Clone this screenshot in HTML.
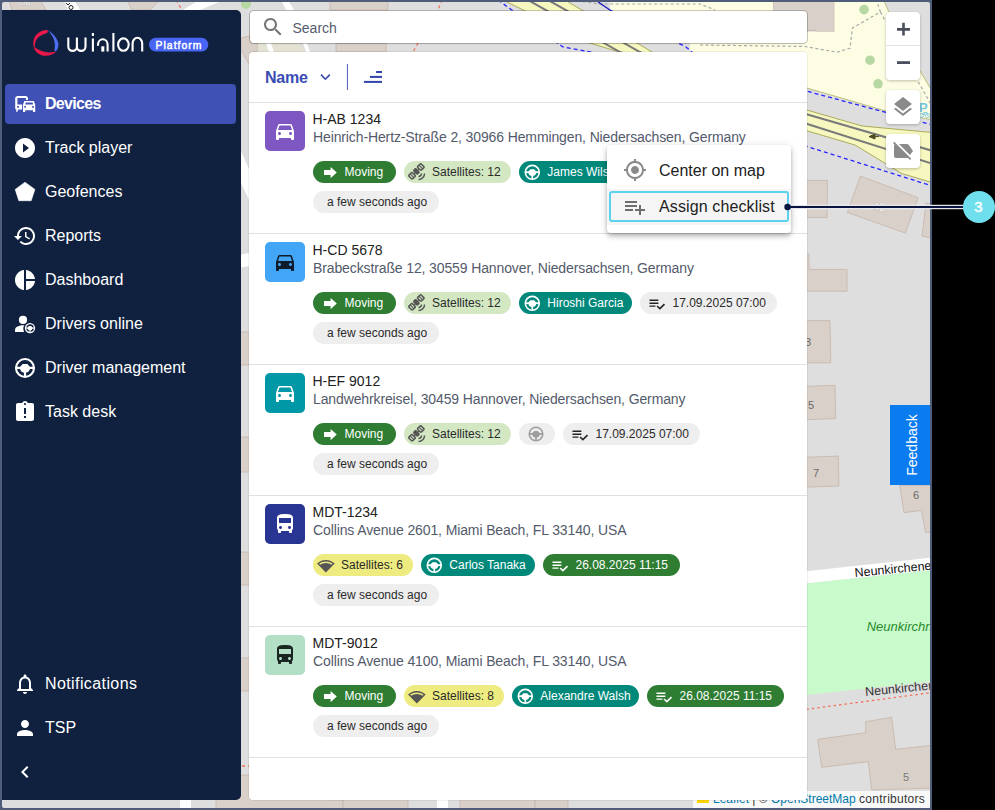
<!DOCTYPE html>
<html><head><meta charset="utf-8">
<style>
*{box-sizing:border-box;margin:0;padding:0}
html,body{width:995px;height:810px;overflow:hidden;background:#000;font-family:"Liberation Sans",sans-serif}
.abs{position:absolute}
#frame{position:absolute;left:0;top:0;width:932px;height:810px;background:#4f5c7a}
#map{position:absolute;left:2px;top:2px;width:928px;height:806px;background:#dfdede;overflow:hidden;border-radius:2px}
#map svg{position:absolute;left:-2px;top:-2px}
#sidebar{position:absolute;left:2px;top:10px;width:239px;height:790px;background:#0f213f;border-radius:0 5px 5px 0}
.nav{position:absolute;left:3px;width:231px;height:40px;color:#fff;font-size:16px}
.nav.active{background:#3f51b5;border-radius:4px;font-weight:bold;letter-spacing:-0.7px}
.nav svg{position:absolute;left:8px;top:8px;width:24px;height:24px}
.nav span{position:absolute;left:40px;top:0;line-height:40px;white-space:nowrap}
#search{position:absolute;left:250px;top:11px;width:556.5px;height:32px;background:#fff;border-radius:4px;box-shadow:0 0 0 1px rgba(0,0,0,.2),0 1px 2px rgba(0,0,0,.1)}
#panel{position:absolute;left:249px;top:52px;width:558px;height:748px;background:#fff;border-radius:4px;overflow:hidden;box-shadow:0 0 0 1px rgba(0,0,0,.06)}
.hdr{position:absolute;left:0;top:0;width:558px;height:51px;border-bottom:1px solid #e0e0e0}
.item{position:absolute;left:0;width:558px;height:131px;border-bottom:1px solid #e0e0e0}
.av{position:absolute;left:16px;top:8px;width:40px;height:40px;border-radius:5px}
.av svg{position:absolute;left:8px;top:8px;width:24px;height:24px}
.t1{position:absolute;left:63.5px;top:7.65px;font-size:14px;line-height:17px;color:#212121;white-space:nowrap}
.t2{position:absolute;left:64px;top:26.15px;font-size:14px;line-height:17px;color:#535a6b;white-space:nowrap;letter-spacing:-0.12px}
.chip{position:absolute;height:22px;border-radius:11px;font-size:12px;line-height:22px;white-space:nowrap}
.chip svg{position:absolute}
.chip span{position:absolute;top:0}
.g{background:#2e7d32;color:#fff}
.lg{background:#d3e7c3;color:#2a2a2a}
.tl{background:#00897b;color:#fff}
.gr{background:#eeeeee;color:#2a2a2a}
.yl{background:#eeeb80;color:#2a2a2a}
.ctrl{position:absolute;left:886px;width:34px;background:#fff;border-radius:4px;box-shadow:0 1px 3px rgba(0,0,0,.25)}
#menu{position:absolute;left:607px;top:145px;width:184px;height:88px;background:#fff;border-radius:4px;box-shadow:0 2px 4px -1px rgba(0,0,0,.2),0 4px 5px 0 rgba(0,0,0,.14),0 1px 10px 0 rgba(0,0,0,.12)}
</style></head><body>
<div id="frame"></div>
<div id="map">
<svg width="995" height="810" viewBox="0 0 995 810"><g fill="#d9d0c9" stroke="#c4b5aa" stroke-width="0.8">
<!-- top strip buildings -->
<path d="M9 0H40L46 10H12Z"/>
<path d="M127 0H160L150 10H132Z"/>
<path d="M330 0H388V10H330Z"/>
<path d="M773 0H834.4V31.8H816V30.4H773Z"/>
<!-- middle strip -->
<path d="M336 43H386V52H336Z"/>

<!-- left strip -->
<path d="M241 38L250 36V43H258V52H250V66L241 50Z"/>
<path d="M236 332H250V365H236Z"/>
<path d="M236 437H250V472H236Z"/>
<path d="M236 552H250V585H236Z"/>
<path d="M236 658H250V691H236Z"/>
<path d="M216 775H250V798L343 800V810H216Z"/>
<!-- bottom strip -->
<path d="M343 798H408V810H343Z"/>
<path d="M460 798H535V810H460Z"/>
<path d="M535 798H568V810H535Z"/>
<!-- right side buildings -->
<path d="M800 180.4H827.5L827 217.5H800Z"/>
<path d="M860.3 176L918.2 197.7L905.3 233.1L847.4 212.4Z"/>
<path d="M926 203L940 206V240L922 236Z"/>
<path d="M800 254H809V269.4H847L847 291.2H800Z"/>
<path d="M800 320.6H830L830.8 362.8H800Z"/>
<path d="M800 386.5L835 385.3L835.7 418.5L800 420Z"/>
<path d="M800 457.5L838.3 456L839 486L800 487.4Z"/>
<path d="M899.7 485.4H935V532.2H925.5L921.5 510.4L904 512.6Z"/>
<path d="M817.7 739.3L865.7 732.7V721.7L891.7 717.3L895.7 749.3L935 745V788L871.7 790L868.3 761.7L821.7 767.3Z"/>
</g>
<!-- yellow area top right -->
<path d="M610 0H773V31.8H834.4V0H883.7L888.5 11L919.8 70.6L930.2 88V119.6L885.3 110.8L805 87.5L690 52V43H610Z" fill="#fdfde3"/>
<path d="M883.7 0L888.5 11L919.8 70.6L932 91" fill="none" stroke="#b8b870" stroke-width="0.9"/>
<path d="M690 52L805 87.5L885.3 110.8L932 119.8" fill="none" stroke="#b8b870" stroke-width="0.9"/>
<!-- dashed paths -->
<g fill="none" stroke="#a8a8a8" stroke-width="1.2" stroke-dasharray="3 2.5">
<path d="M700 45L805 46.5L837.1 52.2L850 48.2L852.4 28.1L880.4 12L876.4 0"/>
<path d="M880.4 12L885.3 20.9"/>
<path d="M918.2 81.9L932 106"/>
<path d="M572 0L600 4L700 4L715 10"/>
</g>
<!-- trees -->
<g fill="#b7d8a2"><circle cx="864.1" cy="9.6" r="4.8"/><circle cx="870" cy="60.2" r="4.8"/><circle cx="878" cy="83.8" r="4.8"/><circle cx="246" cy="4" r="5"/></g>
<!-- road band with rails -->
<path d="M503 0L590 43L805 109.5L862 126L932 132.5V182.5L901.8 173.5L855 145L805 130.2L652 52L565 0Z" fill="#f6f8c0" stroke="#a3a34e" stroke-width="0.9"/>

<g stroke="#7a7a7a" stroke-width="2" fill="none">
<path d="M528 0L620 52L805 113.8L932 150.7"/>
<path d="M548 0L640 52L805 123.3L932 163.7"/>
</g>
<path d="M869 136.6L875 134.2V139Z M874 136.6H879" stroke="#4a4a20" stroke-width="1" fill="#4a4a20"/>
<!-- blue dashed -->
<g fill="none" stroke="#2424ff" stroke-width="1.3" stroke-dasharray="4 3">
<path d="M498 0L563 47L805 90.7L932 124.8"/>
<path d="M610 10L686 47L805 145.8L932 186"/>
<path d="M598 2L610 10" stroke-dasharray="none" stroke="#2020c0" stroke-width="1.5"/>
</g>
<!-- white roads -->
<g fill="#fff">
<path d="M64 0H74L80 10H68Z"/>
<path d="M183 10L199 0H224L200 10Z"/>
<path d="M281 0H288L294 10H286Z"/>
<path d="M258 43H300L304 52H258Z" fill="#e3e2d3"/><path d="M266 43H271L274 52H269Z"/><path d="M303 43H307L310 52H306Z"/>
<path d="M236 139.7L250 171.2V202L236 172.4Z"/><path d="M236 255.6L250 252.8V265.8L236 268.6Z"/>
<path d="M180 800H191V810H180Z"/>
<path d="M437 800H448V810H437Z"/>
<path d="M790 573L932 557.5V570L790 585.2Z"/>
</g>
<!-- red dashed -->
<g fill="none" stroke="#f0735f" stroke-width="1.3" stroke-dasharray="3 3">
<path d="M176 0L182 10"/>
<path d="M442 0L438 10"/>
<path d="M418 43L413 52"/>
<path d="M790 711.6L932 692.5" stroke-dasharray="2.5 3"/>
<path d="M236 766H250"/>
</g>
<!-- park -->
<path d="M790 585.2L932 570V681.5L790 696.8Z" fill="#c8facc"/>
<!-- labels -->
<g font-family="Liberation Sans" font-size="12.5" fill="#222">
<text x="855" y="577" transform="rotate(-5.5 855 577)" fill="#111">Neunkirchener</text>
<text x="865.5" y="696" transform="rotate(-5.5 865.5 696)" fill="#333">Neunkirchen</text>
</g>
<text x="866.7" y="630.7" font-family="Liberation Sans" font-style="italic" font-size="13" fill="#2a8a2a">Neunkirchner</text>
<g font-family="Liberation Sans" font-size="11" fill="#6a6a6a">
<text x="873" y="211" fill="#fff" stroke="#888" stroke-width="0.6" paint-order="stroke">48</text>
<text x="805" y="346">3</text>
<text x="808" y="408.5">5</text>
<text x="813" y="477">7</text>
<text x="913" y="498.5">6</text>
<text x="903" y="781" fill="#7a7a7a">5</text>
</g>
<text x="919" y="111.8" font-family="Liberation Sans" font-weight="bold" font-size="13" fill="#7ac6e0">P</text><g fill="none" stroke="#7ac6e0" stroke-width="0.9"><circle cx="921.5" cy="115.5" r="2"/><circle cx="927.5" cy="115.5" r="2"/><path d="M921.5 115.5L924 112.5H927L927.5 115.5M924 112.5L925 115.5"/></g>
<text x="19" y="4.8" font-family="Liberation Sans" font-size="8" fill="#fff" stroke="#999" stroke-width="0.5" paint-order="stroke">OB</text><g fill="none" stroke="#222" stroke-width="1"><path d="M66 3L68 5L70 3"/><circle cx="71" cy="7.5" r="2"/></g></svg>
</div>
<div class="ctrl" style="top:12px;height:68px">
<div class="abs" style="left:0;top:33px;width:34px;height:1px;background:#e0e0e0"></div>
<svg class="abs" style="left:0;top:0" width="34" height="68" viewBox="886 12 34 68"><path d="M902.2 22.8H904.8V35.6H902.2Z M897 28H910V30.7H897Z" fill="#4a4f5c"/><rect x="897" y="61.2" width="13" height="2.8" fill="#4a4f5c"/></svg>
</div>
<div class="ctrl" style="top:90px;height:34px"><svg class="abs" style="left:5px;top:5px;width:24px;height:24px" viewBox="0 0 24 24" fill="#8a8a8a"><path d="M11.99 18.54l-7.37-5.73L3 14.07l9 7 9-7-1.63-1.27-7.38 5.74zM12 16l7.36-5.73L21 9l-9-7-9 7 1.63 1.27L12 16z"/></svg></div>
<div class="ctrl" style="top:134px;height:34px"><svg class="abs" style="left:5px;top:5px;width:24px;height:24px" viewBox="0 0 24 24" fill="#8a8a8a"><path d="M3.25 2.75l17 17L19 21l-2-2H5c-1.1 0-2-.9-2-2V7c0-.55.23-1.05.59-1.41L2 4l1.25-1.25zM22 12l-4.37-6.16C17.27 5.33 16.67 5 16 5H8l11 11 3-4z"/></svg></div>
<div class="abs" style="left:890px;top:405px;width:40px;height:80px;background:#0b7bf0"><div class="abs" style="left:-18px;top:30px;width:80px;height:20px;line-height:20px;text-align:center;color:#fff;font-size:14px;transform:rotate(-90deg)">Feedback</div></div>

<div class="abs" style="left:693px;top:791px;width:237px;height:17px;background:rgba(255,255,255,.8)"></div>
<div class="abs" style="left:697px;top:791px;height:17px;line-height:17px;font-size:12px;color:#333;white-space:nowrap"><span style="display:inline-block;width:12px;height:8px;background:#ffd500;margin-right:4px"></span><span style="color:#0078a8">Leaflet</span> | © <span style="color:#0078a8">OpenStreetMap</span> <span style="letter-spacing:0.28px">contributors</span></div>
<div id="sidebar"><svg class="abs" style="left:28px;top:15px" width="190" height="40" viewBox="30 25 190 40">
<path d="M47.6 30C42 30 37 32.5 34.5 37.5C33 40.5 33 44.5 33.8 47.5L34.8 47.2C34.8 44 35.3 41.5 36.5 39.5C38.5 36.2 42.5 34.5 47.2 33C47.8 32.2 48 30.8 47.6 30Z" fill="#e8194a"/>
<path d="M33.8 47.4C35.5 52.5 40 55.8 45.5 55.8C50 55.8 54 54 56.5 51.2C53 52.4 50 52.6 47 52.2C42 51.5 38 49.5 35 47.4Z" fill="#e8194a"/>
<path d="M47.8 30C52.5 33 56.5 37 58 42C59 45.5 58 49.5 55.8 51.3C54.8 51.5 54.3 50.6 54.6 49.6C55.3 46 55 42 53.5 38.5C52.2 35.5 50 32.5 47.8 30Z" fill="#4f6ff5"/>
<g fill="none" stroke="#fff" stroke-width="2.1" stroke-linecap="butt">
<path d="M68.3 37.6V46.6A4.3 4.3 0 0 0 76.9 46.6V37.6M76.9 46.6A4.3 4.3 0 0 0 85.5 46.6V37.6"/>
<path d="M92.9 38.5V51.6"/>
<path d="M98 45.8V44.6A4.8 5.3 0 0 1 107.6 44.6V51.6"/>
<path d="M113.4 33V51.6"/>
<ellipse cx="123.4" cy="44.6" rx="5.3" ry="6.2"/>
<path d="M132.6 51.6V43.4A4.8 5.6 0 0 1 142.2 43.4V51.6"/>
</g>
<rect x="91.85" y="33" width="2.1" height="3" fill="#fff"/>
<rect x="101.3" y="46.3" width="3" height="5.3" fill="#fff"/>
<rect x="149" y="37.8" width="59.3" height="13.7" rx="6.85" fill="#4865f6"/>
<text x="155.6" y="48.6" fill="#fff" stroke="#fff" stroke-width="0.45" font-family="Liberation Sans" font-size="10.4" letter-spacing="1.02">Platform</text>
</svg><div class="nav active" style="top:74px"><svg viewBox="13 92 24 24" fill="#fff" style="color:#fff"><path fill-rule="evenodd" d="M17.7 95.9H25.5A2.5 2.5 0 0 1 28 98.4V99.9H25.9V98.1H17.4V104.6H22.2V109.4H18.3L17.2 112H16.3V109.5A1.3 1.3 0 0 1 15.2 108.2V98.4A2.5 2.5 0 0 1 17.7 95.9ZM17.2 106.1V107.8H18.9V106.1Z"/><path fill-rule="evenodd" stroke="#3f51b5" stroke-width="1.1" paint-order="stroke" d="M24.3 100.9H33.8L35.2 104.4V112H33V110.2H25.2V112H23V104.4ZM25.7 102.4L25.2 104.4H33.1L32.6 102.4ZM24.3 106.1V107.8H25.9V106.1ZM32.2 106.1V107.8H33.9V106.1Z"/></svg><span>Devices</span></div><div class="nav" style="top:118px"><svg viewBox="0 0 24 24" fill="#fff" style="color:#fff"><path d="M12 2C6.48 2 2 6.48 2 12s4.48 10 10 10 10-4.48 10-10S17.52 2 12 2zm-2 14.5v-9l6 4.5-6 4.5z"/></svg><span>Track player</span></div><div class="nav" style="top:162px"><svg viewBox="0 0 24 24" fill="#fff" style="color:#fff"><path d="M12 2.2L21.9 9.4L18.2 20.7H5.8L2.2 9.4Z" stroke="#fff" stroke-width="0.6" stroke-linejoin="round"/></svg><span>Geofences</span></div><div class="nav" style="top:206px"><svg viewBox="0 0 24 24" fill="#fff" style="color:#fff"><path d="M13 3c-4.97 0-9 4.03-9 9H1l3.89 3.89.07.14L9 12H6c0-3.87 3.13-7 7-7s7 3.13 7 7-3.13 7-7 7c-1.93 0-3.68-.79-4.94-2.06l-1.42 1.42C8.27 19.99 10.51 21 13 21c4.97 0 9-4.03 9-9s-4.03-9-9-9zm-1 5v5l4.28 2.54.72-1.21-3.5-2.08V8H12z"/></svg><span>Reports</span></div><div class="nav" style="top:250px"><svg viewBox="0 0 24 24" fill="#fff" style="color:#fff"><path d="M11 2v20c-5.07-.5-9-4.79-9-10s3.93-9.5 9-10zm2.03 0v8.99H22c-.47-4.74-4.24-8.52-8.97-8.99zm0 11.01V22c4.74-.47 8.5-4.25 8.97-8.99h-8.97z"/></svg><span>Dashboard</span></div><div class="nav" style="top:294px"><svg viewBox="0 0 24 24" fill="#fff" style="color:#fff"><circle cx="10" cy="7.9" r="4.1"/><path d="M2.05 20.1V17.6C2.05 14.8 6.5 13.2 10 13.2C10.6 13.2 11.2 13.25 11.5 13.3C10.6 14.4 10.3 15.6 10.3 16.6C10.3 18 10.7 19.1 11.3 20.1Z"/><g transform="translate(17 16.1) scale(0.5) translate(-12 -12)"><circle cx="12" cy="12" r="9" fill="none" stroke="currentColor" stroke-width="2.6"/><rect x="3" y="10.75" width="18" height="2.25"/><path d="M9.6 8H14.4L17 11V12.3A5 4.4 0 0 1 7 12.3V11Z"/><rect x="10.9" y="14" width="2.2" height="6.5"/></g></svg><span>Drivers online</span></div><div class="nav" style="top:338px"><svg viewBox="0 0 24 24" fill="#fff" style="color:#fff"><circle cx="12" cy="12" r="9" fill="none" stroke="currentColor" stroke-width="2.1"/><rect x="3" y="10.75" width="18" height="2.25"/><path d="M9.6 8H14.4L17 11V12.3A5 4.4 0 0 1 7 12.3V11Z"/><rect x="10.9" y="14" width="2.2" height="6.5"/></svg><span>Driver management</span></div><div class="nav" style="top:382px"><svg viewBox="0 0 24 24" fill="#fff" style="color:#fff"><path d="M19 3h-4.18C14.4 1.84 13.3 1 12 1c-1.3 0-2.4.84-2.82 2H5c-1.1 0-2 .9-2 2v14c0 1.1.9 2 2 2h14c1.1 0 2-.9 2-2V5c0-1.1-.9-2-2-2zm-6 15h-2v-2h2v2zm0-4h-2V8h2v6zm-1-9c-.55 0-1-.45-1-1s.45-1 1-1 1 .45 1 1-.45 1-1 1z"/></svg><span>Task desk</span></div><div class="nav" style="top:654px"><svg viewBox="0 0 24 24" fill="#fff" style="color:#fff"><path d="M12 22c1.1 0 2-.9 2-2h-4c0 1.1.89 2 2 2zm6-6v-5c0-3.07-1.64-5.64-4.5-6.32V4c0-.83-.67-1.5-1.5-1.5s-1.5.67-1.5 1.5v.68C7.63 5.36 6 7.92 6 11v5l-2 2v1h16v-1l-2-2zm-2 1H8v-6c0-2.48 1.51-4.5 4-4.5s4 2.02 4 4.5v6z"/></svg><span style="letter-spacing:0.4px">Notifications</span></div><div class="nav" style="top:698px"><svg viewBox="0 0 24 24" fill="#fff" style="color:#fff"><path d="M12 12c2.21 0 4-1.79 4-4s-1.79-4-4-4-4 1.79-4 4 1.79 4 4 4zm0 2c-2.67 0-8 1.34-8 4v2h16v-2c0-2.66-5.33-4-8-4z"/></svg><span>TSP</span></div><div class="nav" style="top:742px"><svg viewBox="0 0 24 24" fill="#fff" style="left:7.5px;top:8px"><path d="M15.41 7.41 14 6l-6 6 6 6 1.41-1.41L10.83 12z"/></svg></div></div>

<div id="search">
<svg class="abs" style="left:11px;top:4px;width:24px;height:24px" viewBox="0 0 24 24" fill="#757575"><path d="M15.5 14h-.79l-.28-.27C15.41 12.59 16 11.11 16 9.5 16 5.91 13.090 3 9.5 3S3 5.91 3 9.5 5.91 16 9.5 16c1.61 0 3.09-.59 4.23-1.57l.27.28v.79l5 4.99L20.49 19l-4.99-5zm-6 0C7.01 14 5 11.99 5 9.5S7.01 5 9.5 5 14 7.01 14 9.5 11.99 14 9.5 14z"/></svg>
<div class="abs" style="left:42.5px;top:9px;font-size:14px;line-height:17px;color:#545b6d">Search</div>
</div>
<div id="panel"><div class="hdr">
<div class="abs" style="left:16px;top:15.7px;font-size:16px;line-height:20px;font-weight:bold;letter-spacing:-0.2px;color:#3a4cb4">Name</div>
<svg class="abs" style="left:0;top:0" width="200" height="50" viewBox="249 52 200 50">
<polyline points="321,74.6 325.4,79.2 329.8,74.6" fill="none" stroke="#3949ab" stroke-width="1.6"/>
<rect x="346.9" y="64" width="1.1" height="26" fill="#5c6bc0"/>
<rect x="376.1" y="71" width="5.9" height="2" fill="#3044aa"/>
<rect x="369.9" y="75.9" width="12.1" height="2" fill="#3044aa"/>
<rect x="363.9" y="80.9" width="18.1" height="2" fill="#3044aa"/>
</svg>
</div><div class="item" style="top:51px"><div class="av" style="background:#7e57c2"><svg viewBox="0 0 24 24" fill="#fff"><path d="M18.92 6.01C18.72 5.42 18.16 5 17.5 5h-11c-.66 0-1.21.42-1.42 1.01L3 12v8c0 .55.45 1 1 1h1c.55 0 1-.45 1-1v-1h12v1c0 .55.45 1 1 1h1c.55 0 1-.45 1-1v-8l-2.08-5.99zM6.5 16c-.83 0-1.5-.67-1.5-1.5S5.67 13 6.5 13s1.5.67 1.5 1.5S7.33 16 6.5 16zm11 0c-.83 0-1.5-.67-1.5-1.5s.67-1.5 1.5-1.5 1.5.67 1.5 1.5-.67 1.5-1.5 1.5zM5 11l1.5-4.5h11L19 11H5z"/></svg></div><div class="t1">H-AB 1234</div><div class="t2">Heinrich-Hertz-Straße 2, 30966 Hemmingen, Niedersachsen, Germany</div><div class="chip g" style="left:64px;top:58px;width:83px"><svg style="left:10.5px;top:5.5px;width:13px;height:11.2px" viewBox="0 0 13 11.2" fill="#fff"><path d="M0 3.1H6.6V0L12.8 5.6L6.6 11.2V8.1H0Z"/></svg><span style="left:31.5px">Moving</span></div><div class="chip lg" style="left:155px;top:58px;width:107px"><svg style="left:4px;top:2px;width:18px;height:18px;color:#555" viewBox="0 0 24 24" fill="#555" ><path d="M15.44.59l-3.18 3.18c-.78.78-.78 2.05 0 2.83l1.24 1.24-.71.71-1.24-1.25c-.78-.78-2.05-.78-2.83 0L7.3 8.72c-.78.78-.78 2.05 0 2.83l1.24 1.24-.71.71-1.23-1.25c-.78-.78-2.05-.78-2.83 0L.59 15.43c-.78.78-.78 2.05 0 2.83l3.54 3.54c.78.78 2.05.78 2.83 0l3.18-3.18c.78-.78.78-2.05 0-2.83L8.9 14.55l.71-.71 1.24 1.24c.78.78 2.05.78 2.83 0l1.41-1.41c.78-.78.78-2.05 0-2.83L13.84 9.6l.71-.71 1.24 1.24c.78.78 2.05.78 2.83 0l3.18-3.18c.78-.78.78-2.05 0-2.83L18.26.58c-.78-.78-2.04-.78-2.82.01zM6.6 19.32l-1.06 1.06L2 16.85l1.06-1.06 3.54 3.53zm2.12-2.12l-1.06 1.06-3.54-3.54 1.06-1.06 3.54 3.54zm9.54-9.54l-1.06 1.06-3.53-3.54 1.060-1.06 3.53 3.54zm2.12-2.12L19.32 6.6l-3.54-3.54L16.85 2l3.53 3.54zM14 21v2c4.97 0 9-4.030 9-9h-2c0 3.87-3.13 7-7 7zm0-4v2c2.76 0 5-2.24 5-5h-2c0 1.66-1.34 3-3 3z"/></svg><span style="left:28px">Satellites: 12</span></div><div class="chip tl" style="left:270px;top:58px;width:106px"><svg style="left:4px;top:1.7px;width:18.6px;height:18.6px;color:#fff" viewBox="0 0 24 24" fill="#fff" ><circle cx="12" cy="12" r="9" fill="none" stroke="currentColor" stroke-width="2.1"/><rect x="3" y="10.75" width="18" height="2.25"/><path d="M9.6 8H14.4L17 11V12.3A5 4.4 0 0 1 7 12.3V11Z"/><rect x="10.9" y="14" width="2.2" height="6.5"/></svg><span style="left:28.3px">James Wilson</span></div><div class="chip gr" style="left:383px;top:58px;width:137px"><svg style="left:8.3px;top:2.7px;width:17.8px;height:17.8px;color:#222" viewBox="0 0 24 24" fill="#222" ><path d="M14 10H2v2h12v-2zm0-4H2v2h12V6zM2 16h8v-2H2v2zm19.5-4.5L23 13l-6.99 7-4.51-4.5L13 14l3.01 3 5.49-5.5z"/></svg><span style="left:32.5px">17.09.2025 07:00</span></div><div class="chip gr" style="left:64px;top:88px;width:126px"><span style="left:14px">a few seconds ago</span></div></div><div class="item" style="top:182px"><div class="av" style="background:#42a5f5"><svg viewBox="0 0 24 24" fill="#0d1b2a"><path d="M18.92 6.01C18.72 5.42 18.16 5 17.5 5h-11c-.66 0-1.21.42-1.42 1.01L3 12v8c0 .55.45 1 1 1h1c.55 0 1-.45 1-1v-1h12v1c0 .55.45 1 1 1h1c.55 0 1-.45 1-1v-8l-2.08-5.99zM6.5 16c-.83 0-1.5-.67-1.5-1.5S5.67 13 6.5 13s1.5.67 1.5 1.5S7.33 16 6.5 16zm11 0c-.83 0-1.5-.67-1.5-1.5s.67-1.5 1.5-1.5 1.5.67 1.5 1.5-.67 1.5-1.5 1.5zM5 11l1.5-4.5h11L19 11H5z"/></svg></div><div class="t1">H-CD 5678</div><div class="t2">Brabeckstraße 12, 30559 Hannover, Niedersachsen, Germany</div><div class="chip g" style="left:64px;top:58px;width:83px"><svg style="left:10.5px;top:5.5px;width:13px;height:11.2px" viewBox="0 0 13 11.2" fill="#fff"><path d="M0 3.1H6.6V0L12.8 5.6L6.6 11.2V8.1H0Z"/></svg><span style="left:31.5px">Moving</span></div><div class="chip lg" style="left:155px;top:58px;width:107px"><svg style="left:4px;top:2px;width:18px;height:18px;color:#555" viewBox="0 0 24 24" fill="#555" ><path d="M15.44.59l-3.18 3.18c-.78.78-.78 2.05 0 2.83l1.24 1.24-.71.71-1.24-1.25c-.78-.78-2.05-.78-2.83 0L7.3 8.72c-.78.78-.78 2.05 0 2.83l1.24 1.24-.71.71-1.23-1.25c-.78-.78-2.05-.78-2.83 0L.59 15.43c-.78.78-.78 2.05 0 2.83l3.54 3.54c.78.78 2.05.78 2.83 0l3.18-3.18c.78-.78.78-2.05 0-2.83L8.9 14.55l.71-.71 1.24 1.24c.78.78 2.05.78 2.83 0l1.41-1.41c.78-.78.78-2.05 0-2.83L13.84 9.6l.71-.71 1.24 1.24c.78.78 2.05.78 2.83 0l3.18-3.18c.78-.78.78-2.05 0-2.83L18.26.58c-.78-.78-2.04-.78-2.82.01zM6.6 19.32l-1.06 1.06L2 16.85l1.06-1.06 3.54 3.53zm2.12-2.12l-1.06 1.06-3.54-3.54 1.06-1.06 3.54 3.54zm9.54-9.54l-1.06 1.06-3.53-3.54 1.060-1.06 3.53 3.54zm2.12-2.12L19.32 6.6l-3.54-3.54L16.85 2l3.53 3.54zM14 21v2c4.97 0 9-4.030 9-9h-2c0 3.87-3.13 7-7 7zm0-4v2c2.76 0 5-2.24 5-5h-2c0 1.66-1.34 3-3 3z"/></svg><span style="left:28px">Satellites: 12</span></div><div class="chip tl" style="left:270px;top:58px;width:113px"><svg style="left:4px;top:1.7px;width:18.6px;height:18.6px;color:#fff" viewBox="0 0 24 24" fill="#fff" ><circle cx="12" cy="12" r="9" fill="none" stroke="currentColor" stroke-width="2.1"/><rect x="3" y="10.75" width="18" height="2.25"/><path d="M9.6 8H14.4L17 11V12.3A5 4.4 0 0 1 7 12.3V11Z"/><rect x="10.9" y="14" width="2.2" height="6.5"/></svg><span style="left:28.3px">Hiroshi Garcia</span></div><div class="chip gr" style="left:391px;top:58px;width:137px"><svg style="left:8.3px;top:2.7px;width:17.8px;height:17.8px;color:#222" viewBox="0 0 24 24" fill="#222" ><path d="M14 10H2v2h12v-2zm0-4H2v2h12V6zM2 16h8v-2H2v2zm19.5-4.5L23 13l-6.99 7-4.51-4.5L13 14l3.01 3 5.49-5.5z"/></svg><span style="left:32.5px">17.09.2025 07:00</span></div><div class="chip gr" style="left:64px;top:88px;width:126px"><span style="left:14px">a few seconds ago</span></div></div><div class="item" style="top:313px"><div class="av" style="background:#0097a7"><svg viewBox="0 0 24 24" fill="#fff"><path d="M18.92 6.01C18.72 5.42 18.16 5 17.5 5h-11c-.66 0-1.21.42-1.42 1.01L3 12v8c0 .55.45 1 1 1h1c.55 0 1-.45 1-1v-1h12v1c0 .55.45 1 1 1h1c.55 0 1-.45 1-1v-8l-2.08-5.99zM6.5 16c-.83 0-1.5-.67-1.5-1.5S5.67 13 6.5 13s1.5.67 1.5 1.5S7.33 16 6.5 16zm11 0c-.83 0-1.5-.67-1.5-1.5s.67-1.5 1.5-1.5 1.5.67 1.5 1.5-.67 1.5-1.5 1.5zM5 11l1.5-4.5h11L19 11H5z"/></svg></div><div class="t1">H-EF 9012</div><div class="t2">Landwehrkreisel, 30459 Hannover, Niedersachsen, Germany</div><div class="chip g" style="left:64px;top:58px;width:83px"><svg style="left:10.5px;top:5.5px;width:13px;height:11.2px" viewBox="0 0 13 11.2" fill="#fff"><path d="M0 3.1H6.6V0L12.8 5.6L6.6 11.2V8.1H0Z"/></svg><span style="left:31.5px">Moving</span></div><div class="chip lg" style="left:155px;top:58px;width:107px"><svg style="left:4px;top:2px;width:18px;height:18px;color:#555" viewBox="0 0 24 24" fill="#555" ><path d="M15.44.59l-3.18 3.18c-.78.78-.78 2.05 0 2.83l1.24 1.24-.71.71-1.24-1.25c-.78-.78-2.05-.78-2.83 0L7.3 8.72c-.78.78-.78 2.05 0 2.83l1.24 1.24-.71.71-1.23-1.25c-.78-.78-2.05-.78-2.83 0L.59 15.43c-.78.78-.78 2.05 0 2.83l3.54 3.54c.78.78 2.05.78 2.83 0l3.18-3.18c.78-.78.78-2.05 0-2.83L8.9 14.55l.71-.71 1.24 1.24c.78.78 2.05.78 2.83 0l1.41-1.41c.78-.78.78-2.05 0-2.83L13.84 9.6l.71-.71 1.24 1.24c.78.78 2.05.78 2.83 0l3.18-3.18c.78-.78.78-2.05 0-2.83L18.26.58c-.78-.78-2.04-.78-2.82.01zM6.6 19.32l-1.06 1.06L2 16.85l1.06-1.06 3.54 3.53zm2.12-2.12l-1.06 1.06-3.54-3.54 1.06-1.06 3.54 3.54zm9.54-9.54l-1.06 1.06-3.53-3.54 1.060-1.06 3.53 3.54zm2.12-2.12L19.32 6.6l-3.54-3.54L16.85 2l3.53 3.54zM14 21v2c4.97 0 9-4.030 9-9h-2c0 3.87-3.13 7-7 7zm0-4v2c2.76 0 5-2.24 5-5h-2c0 1.66-1.34 3-3 3z"/></svg><span style="left:28px">Satellites: 12</span></div><div class="chip gr" style="left:270px;top:58px;width:36px"><svg style="left:8px;top:2.3px;width:18px;height:18px;color:#9e9e9e" viewBox="0 0 24 24" fill="#9e9e9e" ><circle cx="12" cy="12" r="9" fill="none" stroke="currentColor" stroke-width="2.1"/><rect x="3" y="10.75" width="18" height="2.25"/><path d="M9.6 8H14.4L17 11V12.3A5 4.4 0 0 1 7 12.3V11Z"/><rect x="10.9" y="14" width="2.2" height="6.5"/></svg></div><div class="chip gr" style="left:314px;top:58px;width:137px"><svg style="left:8.3px;top:2.7px;width:17.8px;height:17.8px;color:#222" viewBox="0 0 24 24" fill="#222" ><path d="M14 10H2v2h12v-2zm0-4H2v2h12V6zM2 16h8v-2H2v2zm19.5-4.5L23 13l-6.99 7-4.51-4.5L13 14l3.01 3 5.49-5.5z"/></svg><span style="left:32.5px">17.09.2025 07:00</span></div><div class="chip gr" style="left:64px;top:88px;width:126px"><span style="left:14px">a few seconds ago</span></div></div><div class="item" style="top:444px"><div class="av" style="background:#283593"><svg viewBox="0 0 24 24" fill="#fff"><path d="M4 16c0 .88.39 1.67 1 2.22V20c0 .55.45 1 1 1h1c.55 0 1-.45 1-1v-1h8v1c0 .55.45 1 1 1h1c.55 0 1-.45 1-1v-1.78c.61-.55 1-1.34 1-2.22V6c0-3.5-3.58-4-8-4s-8 .5-8 4v10zm3.5 1c-.83 0-1.5-.67-1.5-1.5S6.67 14 7.5 14s1.5.67 1.5 1.5S8.33 17 7.5 17zm9 0c-.83 0-1.5-.67-1.5-1.5s.67-1.5 1.5-1.5 1.5.67 1.5 1.5-.67 1.5-1.5 1.5zm1.5-6H6V6h12v5z"/></svg></div><div class="t1">MDT-1234</div><div class="t2">Collins Avenue 2601, Miami Beach, FL 33140, USA</div><div class="chip yl" style="left:64px;top:58px;width:100px"><svg style="left:4.2px;top:2.7px;width:17.7px;height:17.7px;color:#555" viewBox="0 0 24 24" fill="#555" ><path d="M12 4C7.31 4 3.07 5.9 0 8.98L12 21 24 8.98C20.93 5.9 16.69 4 12 4zM2.92 9.07C5.51 7.08 8.67 6 12 6s6.49 1.08 9.08 3.07l-1.43 1.43C17.5 8.940 14.86 8 12 8s-5.5.94-7.65 2.51L2.92 9.07z"/></svg><span style="left:28px">Satellites: 6</span></div><div class="chip tl" style="left:172px;top:58px;width:114px"><svg style="left:4px;top:1.7px;width:18.6px;height:18.6px;color:#fff" viewBox="0 0 24 24" fill="#fff" ><circle cx="12" cy="12" r="9" fill="none" stroke="currentColor" stroke-width="2.1"/><rect x="3" y="10.75" width="18" height="2.25"/><path d="M9.6 8H14.4L17 11V12.3A5 4.4 0 0 1 7 12.3V11Z"/><rect x="10.9" y="14" width="2.2" height="6.5"/></svg><span style="left:28.3px">Carlos Tanaka</span></div><div class="chip g" style="left:294px;top:58px;width:137px"><svg style="left:8.3px;top:2.7px;width:17.8px;height:17.8px;color:#fff" viewBox="0 0 24 24" fill="#fff" ><path d="M14 10H2v2h12v-2zm0-4H2v2h12V6zM2 16h8v-2H2v2zm19.5-4.5L23 13l-6.99 7-4.51-4.5L13 14l3.01 3 5.49-5.5z"/></svg><span style="left:32.5px">26.08.2025 11:15</span></div><div class="chip gr" style="left:64px;top:88px;width:126px"><span style="left:14px">a few seconds ago</span></div></div><div class="item" style="top:575px"><div class="av" style="background:#b3dfc7"><svg viewBox="0 0 24 24" fill="#1a2420"><path d="M4 16c0 .88.39 1.67 1 2.22V20c0 .55.45 1 1 1h1c.55 0 1-.45 1-1v-1h8v1c0 .55.45 1 1 1h1c.55 0 1-.45 1-1v-1.78c.61-.55 1-1.34 1-2.22V6c0-3.5-3.58-4-8-4s-8 .5-8 4v10zm3.5 1c-.83 0-1.5-.67-1.5-1.5S6.67 14 7.5 14s1.5.67 1.5 1.5S8.33 17 7.5 17zm9 0c-.83 0-1.5-.67-1.5-1.5s.67-1.5 1.5-1.5 1.5.67 1.5 1.5-.67 1.5-1.5 1.5zm1.5-6H6V6h12v5z"/></svg></div><div class="t1">MDT-9012</div><div class="t2">Collins Avenue 4100, Miami Beach, FL 33140, USA</div><div class="chip g" style="left:64px;top:58px;width:83px"><svg style="left:10.5px;top:5.5px;width:13px;height:11.2px" viewBox="0 0 13 11.2" fill="#fff"><path d="M0 3.1H6.6V0L12.8 5.6L6.6 11.2V8.1H0Z"/></svg><span style="left:31.5px">Moving</span></div><div class="chip yl" style="left:155px;top:58px;width:100px"><svg style="left:4.2px;top:2.7px;width:17.7px;height:17.7px;color:#555" viewBox="0 0 24 24" fill="#555" ><path d="M12 4C7.31 4 3.07 5.9 0 8.98L12 21 24 8.98C20.93 5.9 16.69 4 12 4zM2.92 9.07C5.51 7.08 8.67 6 12 6s6.49 1.08 9.08 3.07l-1.43 1.43C17.5 8.940 14.86 8 12 8s-5.5.94-7.65 2.51L2.92 9.07z"/></svg><span style="left:28px">Satellites: 8</span></div><div class="chip tl" style="left:263px;top:58px;width:127px"><svg style="left:4px;top:1.7px;width:18.6px;height:18.6px;color:#fff" viewBox="0 0 24 24" fill="#fff" ><circle cx="12" cy="12" r="9" fill="none" stroke="currentColor" stroke-width="2.1"/><rect x="3" y="10.75" width="18" height="2.25"/><path d="M9.6 8H14.4L17 11V12.3A5 4.4 0 0 1 7 12.3V11Z"/><rect x="10.9" y="14" width="2.2" height="6.5"/></svg><span style="left:28.3px">Alexandre Walsh</span></div><div class="chip g" style="left:398px;top:58px;width:137px"><svg style="left:8.3px;top:2.7px;width:17.8px;height:17.8px;color:#fff" viewBox="0 0 24 24" fill="#fff" ><path d="M14 10H2v2h12v-2zm0-4H2v2h12V6zM2 16h8v-2H2v2zm19.5-4.5L23 13l-6.99 7-4.51-4.5L13 14l3.01 3 5.49-5.5z"/></svg><span style="left:32.5px">26.08.2025 11:15</span></div><div class="chip gr" style="left:64px;top:88px;width:126px"><span style="left:14px">a few seconds ago</span></div></div></div>
<div id="menu">
<svg class="abs" style="left:16px;top:13px;width:24px;height:24px" viewBox="0 0 24 24" fill="#8a8a8a"><path d="M12 8c-2.21 0-4 1.79-4 4s1.79 4 4 4 4-1.79 4-4-1.79-4-4-4zm8.94 3c-.46-4.17-3.77-7.48-7.94-7.94V1h-2v2.06C6.830 3.52 3.52 6.83 3.06 11H1v2h2.06c.46 4.17 3.77 7.48 7.94 7.94V23h2v-2.06c4.17-.46 7.48-3.77 7.94-7.94H23v-2h-2.06zM12 19c-3.87 0-7-3.13-7-7s3.13-7 7-7 7 3.13 7 7-3.13 7-7 7z"/></svg>
<div class="abs" style="left:52px;top:15.7px;font-size:16px;line-height:20px;color:#212121">Center on map</div>
<div class="abs" style="left:0;top:44px;width:184px;height:36px;background:#f5f5f5"></div>
<div class="abs" style="left:2px;top:45.8px;width:180px;height:31.5px;border:2px solid #5cd2ec;border-radius:3px"></div>
<svg class="abs" style="left:16px;top:50px;width:24px;height:24px" viewBox="0 0 24 24" fill="#6d6d6d"><path d="M14 10H2v2h12v-2zm0-4H2v2h12V6zm4 8v-4h-2v4h-4v2h4v4h2v-4h4v-2h-4zM2 16h8v-2H2v2z"/></svg>
<div class="abs" style="left:52px;top:52px;font-size:16px;line-height:20px;color:#212121;letter-spacing:0.12px">Assign checklist</div>
</div>
<svg class="abs" style="left:0;top:0" width="995" height="810" viewBox="0 0 995 810">
<rect x="788" y="204.8" width="180" height="4.4" fill="#fff"/>
<rect x="788" y="205.9" width="180" height="2.2" fill="#0a1640"/>
<circle cx="787.6" cy="207" r="3.3" fill="#0a1640"/>
<circle cx="979" cy="207" r="16" fill="#6fdfee"/>
<text x="978.4" y="212.3" text-anchor="middle" fill="#fff" stroke="#fff" stroke-width="0.35" font-family="Liberation Sans" font-size="15.5">3</text>
</svg>
</body></html>
